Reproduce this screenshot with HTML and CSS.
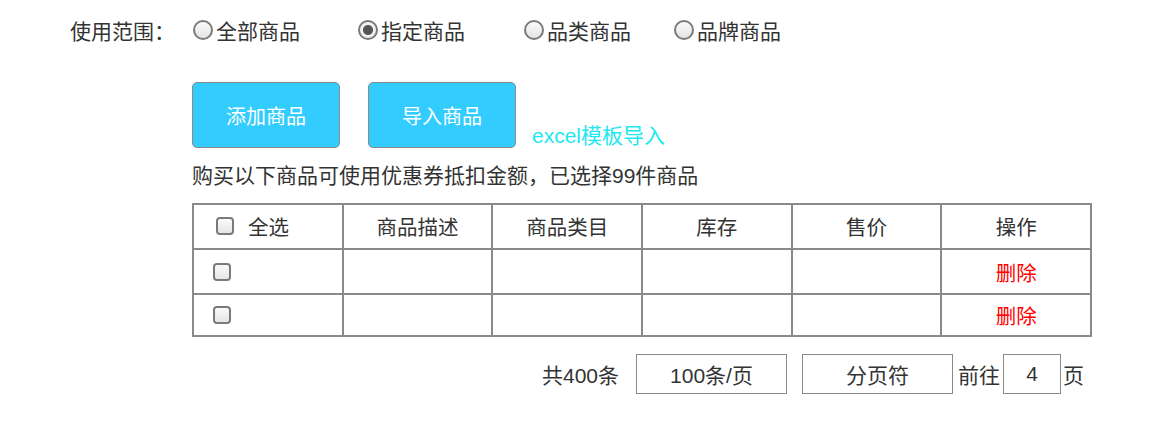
FILE: index.html
```html
<!DOCTYPE html>
<html lang="zh-CN">
<head>
<meta charset="utf-8">
<title>使用范围</title>
<link rel="stylesheet" href="styles.css">
</head>
<body>
<div class="form">
  <div class="label">使用范围：</div>
  <div class="radios">
    <label class="opt"><input type="radio" name="scope" class="radio"><span>全部商品</span></label>
    <label class="opt"><input type="radio" name="scope" class="radio" checked><span>指定商品</span></label>
    <label class="opt"><input type="radio" name="scope" class="radio"><span>品类商品</span></label>
    <label class="opt"><input type="radio" name="scope" class="radio"><span>品牌商品</span></label>
  </div>

  <div class="spacer"></div>
  <div class="content">
    <div class="actions">
      <button class="btn">添加商品</button>
      <button class="btn btn-second">导入商品</button>
      <a class="excel">excel模板导入</a>
    </div>
    <p class="tip">购买以下商品可使用优惠券抵扣金额，已选择99件商品</p>
    <table class="grid">
      <thead>
        <tr class="row-head">
          <th class="cell-check"><label class="check-label"><input type="checkbox" class="check"><span>全选</span></label></th>
          <th>商品描述</th>
          <th>商品类目</th>
          <th>库存</th>
          <th>售价</th>
          <th>操作</th>
        </tr>
      </thead>
      <tbody>
        <tr class="row">
          <td class="cell-check cell-check-body"><input type="checkbox" class="check"></td>
          <td></td><td></td><td></td><td></td>
          <td class="del">删除</td>
        </tr>
        <tr class="row row-last">
          <td class="cell-check cell-check-body"><input type="checkbox" class="check"></td>
          <td></td><td></td><td></td><td></td>
          <td class="del">删除</td>
        </tr>
      </tbody>
    </table>
    <div class="pager">
      <span class="total">共400条</span>
      <span class="box box-size">100条/页</span>
      <span class="box box-sep">分页符</span>
      <span class="goto">前往</span>
      <span class="box box-page">4</span>
      <span class="unit">页</span>
    </div>
  </div>
</div>
</body>
</html>
```
FILE: styles.css
```css
* { box-sizing: border-box; }
body {
  margin: 0;
  background: #fff;
  color: #333;
  font-family: "Liberation Sans", "Noto Sans CJK SC", sans-serif;
  font-size: 21px;
}
.form {
  display: grid;
  grid-template-columns: 122px 899px;
  padding: 10px 0 0 70px;
}
.label {
  height: 40px;
  display: flex;
  align-items: center;
}
.radios {
  display: grid;
  grid-template-columns: 165px 166px 150px auto;
  height: 40px;
  align-items: center;
}
.opt {
  display: flex;
  align-items: center;
}
.radio {
  appearance: none;
  -webkit-appearance: none;
  flex: none;
  width: 20px;
  height: 20px;
  min-width: 20px;
  margin: 0 3px 0 1px;
  padding: 0;
  border: 2px solid #7a7a7a;
  border-radius: 50%;
  background: linear-gradient(#fafafa, #e4e4e4);
}
.radio:checked {
  background: radial-gradient(circle, #555 0 4.5px, #f0f0f0 5.5px);
}
.content {
  padding-top: 32px;
}
.actions {
  display: flex;
  align-items: flex-end;
}
.btn {
  width: 148px;
  height: 66px;
  background: #33ccff;
  border: 1.5px solid #8a8a8a;
  border-radius: 5px;
  color: #fff;
  font-family: "Liberation Sans", "Noto Sans CJK SC", sans-serif;
  font-size: 20px;
  padding: 0;
}
.btn-second { margin-left: 28px; }
.excel {
  margin-left: 16px;
  color: #1ce8f0;
  line-height: 26px;
  margin-bottom: -1px;
}
.tip {
  margin: 13px 0 0;
  line-height: 30px;
}
.grid {
  margin-top: 12px;
  width: 900px;
  border-collapse: collapse;
  table-layout: fixed;
}
.grid th, .grid td {
  border: 2px solid #8a8a8a;
  font-weight: normal;
  text-align: center;
  padding: 0;
  font-size: 20.5px;
}
.row-head { height: 45px; }
.row-head th { padding-bottom: 2px; }
.row { height: 45px; }
.row-last { height: 42px; }
.grid .cell-check {
  text-align: left;
  padding-left: 22px;
}
.grid .cell-check-body { padding-left: 19px; }
.check-label {
  display: flex;
  align-items: center;
}
.check {
  appearance: none;
  -webkit-appearance: none;
  flex: none;
  width: 18px;
  height: 18px;
  min-width: 18px;
  padding: 0;
  margin: 0 14px 0 0;
  border: 2px solid #7a7a7a;
  border-radius: 4px;
  background: linear-gradient(#fafafa, #e6e6e6);
  vertical-align: middle;
}
.cell-check-body .check { margin: 0; display: block; }
.del { color: #ff0000; }
.pager {
  margin-top: 17px;
  display: flex;
  align-items: center;
  justify-content: flex-end;
  padding-right: 7px;
}
.box {
  height: 40px;
  border: 1.5px solid #8a8a8a;
  display: flex;
  align-items: center;
  justify-content: center;
}
.box-size { width: 151px; margin-left: 17px; }
.box-sep { width: 151px; margin-left: 15px; }
.goto { margin-left: 5px; }
.box-page { width: 58px; margin-left: 3px; }
.unit { margin-left: 2px; }
```
